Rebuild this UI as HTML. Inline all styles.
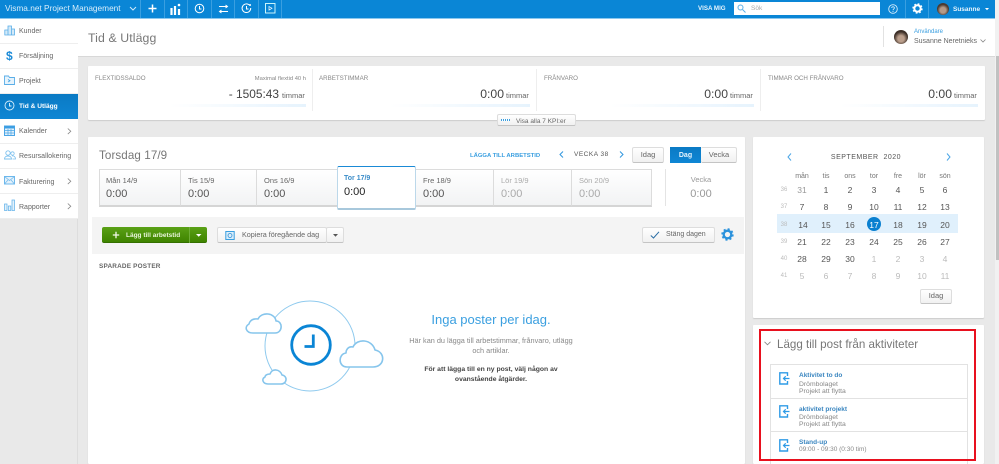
<!DOCTYPE html>
<html lang="sv"><head><meta charset="utf-8"><title>Tid &amp; Utlägg</title>
<style>
html,body{margin:0;padding:0;width:999px;height:464px;overflow:hidden;background:#e9e9e9}
body{position:relative;font-family:"Liberation Sans",sans-serif;color:#555;font-size:8px}
.a,.t{position:absolute}
.t{line-height:14px;white-space:nowrap;margin-top:1px}
.r{text-align:right}.c{text-align:center}
.card{position:absolute;background:#fff;box-shadow:0 1px 1px #ccc;border-radius:1px}
.nav{position:absolute;left:0;width:78px;height:25px;background:#fff;border-bottom:1px solid #eee;box-sizing:border-box}
.btn{position:absolute;box-sizing:border-box;background:linear-gradient(#fff,#f1f1f1);border:1px solid #ddd;border-bottom:1px solid #c4c4c4;border-radius:2px}
.day{position:absolute;top:169px;height:38px;box-sizing:border-box;background:linear-gradient(#fff,#f2f3f4);border:1px solid #dcdcdc;border-bottom:2px solid #d5d5d5;border-left:0}
svg{position:absolute;overflow:visible}
.cal{font-size:8.5px;width:20px;text-align:center;color:#555}
.g{color:#bbb}
.wk{font-size:6px;color:#bbb;width:14px;text-align:center}
.wd{font-size:7px;color:#777;width:20px;text-align:center}
.kh{font-size:6.2px;color:#888}
.kv{font-size:12.2px;color:#444}
.ku{font-size:7.5px;color:#666}
.n{font-size:7px;color:#666}
.dl{font-size:7.5px;color:#666}
.dv{font-size:11px;color:#555}
.an{font-size:6.5px;font-weight:bold;color:#3a86c0}
.ad{font-size:6.8px;color:#888}
</style></head><body>

<!-- Scrollbar -->
<div class="a" style="left:995px;top:0;width:4px;height:464px;background:#f1f1f1"></div>
<div class="a" style="left:996px;top:56px;width:3px;height:204px;background:#c1c1c1"></div>

<!-- Top bar -->
<div class="a" style="left:0;top:0;width:995px;height:18px;background:#0a86d6;border-bottom:1px solid #8cc8ee"></div>
<div class="t" style="left:5px;top:0;font-size:8.3px;color:#d9eefb">Visma.net Project Management</div>
<svg style="left:129px;top:6px" width="8" height="5"><path d="M1 1l3 3 3-3" fill="none" stroke="#cfe8f9" stroke-width="1"/></svg>
<div class="a" style="left:140px;top:0;width:1px;height:18px;background:#3a9fe0"></div>
<svg style="left:148px;top:4px" width="9" height="9"><path d="M4.500 .5v8M.5 4.500h8" stroke="#fff" stroke-width="1.500"/></svg>
<div class="a" style="left:164px;top:0;width:1px;height:18px;background:#3a9fe0"></div>
<svg style="left:170px;top:3px" width="11" height="11"><path d="M1.500 5v7M5 3v9M9 6v6" stroke="#fff" stroke-width="2.200"/><circle cx="9" cy="2" r="1.300" fill="#fff"/></svg>
<div class="a" style="left:187px;top:0;width:1px;height:18px;background:#3a9fe0"></div>
<svg style="left:194px;top:3px" width="11" height="11"><circle cx="5.500" cy="5.500" r="4.300" fill="none" stroke="#fff" stroke-width="1"/><path d="M5.500 3v3h2" fill="none" stroke="#fff"/></svg>
<div class="a" style="left:211px;top:0;width:1px;height:18px;background:#3a9fe0"></div>
<svg style="left:218px;top:4px" width="11" height="10"><path d="M1 2.500h8M7.500 1l2 1.500-2 1.500M10 7.500H2M3.500 6l-2 1.500 2 1.500" fill="none" stroke="#fff"/></svg>
<div class="a" style="left:234px;top:0;width:1px;height:18px;background:#3a9fe0"></div>
<svg style="left:241px;top:3px" width="11" height="11"><path d="M8 1.800A4.300 4.300 0 1 0 9.700 5" fill="none" stroke="#fff"/><path d="M5.500 3v3h2" fill="none" stroke="#fff"/><circle cx="9" cy="2" r="1" fill="#fff"/></svg>
<div class="a" style="left:258px;top:0;width:1px;height:18px;background:#3a9fe0"></div>
<svg style="left:265px;top:3px" width="11" height="11"><rect x=".5" y=".5" width="9.500" height="9.500" fill="none" stroke="#dff" stroke-width=".9"/><path d="M4 3.500l3 1.800-3 1.800z" fill="none" stroke="#fff" stroke-width=".7"/></svg>
<div class="a" style="left:281px;top:0;width:1px;height:18px;background:#3a9fe0"></div>

<div class="t" style="left:698px;top:1px;font-size:6.2px;font-weight:bold;color:#e6f4fd">VISA MIG</div>
<div class="a" style="left:734px;top:2px;width:146px;height:13px;background:#fff"></div>
<svg style="left:737px;top:4px" width="9" height="9"><circle cx="3.500" cy="3.500" r="2.500" fill="none" stroke="#5aaee8"/><path d="M5.500 5.500l3 3" stroke="#5aaee8"/></svg>
<div class="t" style="left:751px;top:1px;font-size:6.5px;color:#aaa">Sök</div>
<svg style="left:888px;top:4px" width="10" height="10"><circle cx="5" cy="5" r="4.300" fill="none" stroke="#d5ecfb" stroke-width=".9"/><path d="M3.700 4c0-1.700 2.700-1.700 2.700 0 0 1-1.400 1-1.400 2.200" fill="none" stroke="#e5f4fd" stroke-width=".8"/><circle cx="5" cy="7.500" r=".5" fill="#fff"/></svg>
<div class="a" style="left:905px;top:0;width:1px;height:18px;background:#3a9fe0"></div>
<svg style="left:912px;top:3px" width="11" height="11"><circle cx="5.500" cy="5.500" r="3.200" fill="none" stroke="#fff" stroke-width="2"/><circle cx="5.500" cy="5.500" r="4.300" fill="none" stroke="#fff" stroke-width="1.800" stroke-dasharray="1.700 1.680"/></svg>
<div class="a" style="left:928px;top:0;width:1px;height:18px;background:#3a9fe0"></div>
<div class="a" style="left:937px;top:3px;width:12px;height:12px;border-radius:50%;background:radial-gradient(circle at 50% 60%,#b59a88 0 30%,#4b3a30 60%)"></div>
<div class="t" style="left:953px;top:2px;font-size:6.5px;font-weight:bold;color:#e6f4fd">Susanne</div>
<svg style="left:985px;top:8px" width="5" height="3"><path d="M0 0h4L2 2.200z" fill="#fff"/></svg>

<!-- Header -->
<div class="a" style="left:78px;top:19px;width:917px;height:37px;background:#fff;border-bottom:1px solid #d8d8d8"></div>
<div class="t" style="left:88px;top:28px;font-size:12.300px;line-height:18px;color:#777;letter-spacing:.1px">Tid &amp; Utlägg</div>
<div class="a" style="left:883px;top:26px;width:1px;height:21px;background:#e2e2e2"></div>
<div class="a" style="left:894px;top:30px;width:14px;height:14px;border-radius:50%;background:radial-gradient(circle at 50% 62%,#bb9f8c 0 28%,#3d2f27 62%)"></div>
<div class="t" style="left:914px;top:24px;font-size:6px;color:#3a9fe0">Användare</div>
<div class="t" style="left:914px;top:34px;font-size:7px;color:#666">Susanne Neretnieks</div>
<svg style="left:980px;top:39px" width="6" height="4"><path d="M.5.500l2.500 2.500 2.500-2.500" fill="none" stroke="#888" stroke-width=".8"/></svg>

<!-- Sidebar -->
<div class="a" style="left:0;top:19px;width:78px;height:445px;background:#e9e9e9;border-right:1px solid #ddd;box-sizing:border-box"></div>
<div class="nav" style="top:19px"></div>
<div class="nav" style="top:44px"></div>
<div class="nav" style="top:69px"></div>
<div class="a" style="left:0;top:94px;width:78px;height:25px;background:linear-gradient(#0a7ac4,#0f86d4)"></div>
<div class="nav" style="top:119px"></div><div class="nav" style="top:144px"></div><div class="nav" style="top:169px"></div><div class="nav" style="top:194px;height:25px"></div>
<div class="t n" style="left:19px;top:24px">Kunder</div>
<div class="t n" style="left:19px;top:49px">Försäljning</div>
<div class="t n" style="left:19px;top:74px">Projekt</div>
<div class="t" style="left:19px;top:99px;font-size:6.6px;color:#fff;font-weight:bold">Tid &amp; Utlägg</div>
<div class="t n" style="left:19px;top:124px">Kalender</div>
<div class="t n" style="left:19px;top:149px">Resursallokering</div>
<div class="t n" style="left:19px;top:175px">Fakturering</div>
<div class="t n" style="left:19px;top:200px">Rapporter</div>
<svg style="left:4px;top:25px" width="11" height="11"><path d="M4 1h3.500v9H4zM.8 5H4v5H.8zM7.500 4H10.500v6H7.500z" fill="#d3e9f8" stroke="#5aaee8" stroke-width=".8"/></svg>
<div class="t" style="left:6px;top:48px;font-size:12px;font-weight:bold;color:#1c8bd8">$</div>
<svg style="left:4px;top:75px" width="11" height="10"><path d="M.5 1h4l1 1.500h5V9.500H.5z" fill="#e6f3fc" stroke="#5aaee8" stroke-width=".9"/><path d="M4 4.500l2 1.300-2 1.300" fill="none" stroke="#3a9fe0" stroke-width=".8"/></svg>
<svg style="left:4px;top:100px" width="11" height="11"><circle cx="5.500" cy="5.500" r="4.500" fill="none" stroke="#d8eefb" stroke-width=".9"/><path d="M5.500 3v3h2" fill="none" stroke="#e8f5fe" stroke-width=".9"/></svg>
<svg style="left:4px;top:125px" width="11" height="11"><rect x=".5" y="1" width="10" height="9.500" fill="#e3f1fb" stroke="#4aa5e6"/><rect x=".5" y="1" width="10" height="2.500" fill="#3c9ee3"/><path d="M1 5.500h9M1 8h9M4 4v6M7 4v6" stroke="#4aa5e6" stroke-width=".7"/></svg>
<svg style="left:4px;top:150px" width="12" height="10"><circle cx="4" cy="3" r="2.200" fill="none" stroke="#7cc0ee" stroke-width=".9"/><path d="M.5 9c0-4 7-4 7 0z" fill="none" stroke="#7cc0ee" stroke-width=".9"/><circle cx="8.500" cy="3.500" r="1.700" fill="none" stroke="#7cc0ee" stroke-width=".8"/><path d="M8 6c2-.500 3.500 1 3.500 3H8.500" fill="none" stroke="#7cc0ee" stroke-width=".8"/></svg>
<svg style="left:4px;top:176px" width="11" height="9"><rect x=".5" y=".5" width="10" height="7.500" fill="#e3f1fb" stroke="#6db8ec"/><path d="M.5 .5l5 4 5-4M.5 8l3.500-4M10.500 8L7 4" fill="none" stroke="#6db8ec" stroke-width=".7"/></svg>
<svg style="left:4px;top:199px" width="11" height="12"><rect x=".5" y="5" width="2.500" height="6.500" fill="#e3f1fb" stroke="#5aaee8" stroke-width=".7"/><rect x="4.300" y="7" width="2.500" height="4.500" fill="#e3f1fb" stroke="#5aaee8" stroke-width=".7"/><rect x="8" y="1" width="2.500" height="10.500" fill="#e3f1fb" stroke="#5aaee8" stroke-width=".7"/></svg>
<svg style="left:67px;top:128px" width="5" height="7"><path d="M.8.500l3 2.800-3 2.800" fill="none" stroke="#888" stroke-width=".8"/></svg>
<svg style="left:67px;top:178px" width="5" height="7"><path d="M.8.500l3 2.800-3 2.800" fill="none" stroke="#888" stroke-width=".8"/></svg>
<svg style="left:67px;top:203px" width="5" height="7"><path d="M.8.500l3 2.800-3 2.800" fill="none" stroke="#888" stroke-width=".8"/></svg>

<!-- KPI card -->
<div class="card" style="left:88px;top:66px;width:897px;height:54px"></div>
<div class="a" style="left:312px;top:69px;width:1px;height:42px;background:#eee"></div>
<div class="a" style="left:536px;top:69px;width:1px;height:42px;background:#eee"></div>
<div class="a" style="left:760px;top:69px;width:1px;height:42px;background:#eee"></div>
<div class="t kh" style="left:95px;top:71px">FLEXTIDSSALDO</div>
<div class="t kh" style="left:319px;top:71px">ARBETSTIMMAR</div>
<div class="t kh" style="left:544px;top:71px">FRÅNVARO</div>
<div class="t kh" style="left:768px;top:71px">TIMMAR OCH FRÅNVARO</div>
<div class="t r" style="left:206px;width:100px;top:71px;font-size:5.8px;color:#888">Maximal flextid 40 h</div>
<div class="t kv r" style="left:180px;width:99px;top:86px;font-size:11.9px">- 1505:43</div><div class="t ku" style="left:282px;top:88px">timmar</div>
<div class="t kv r" style="left:430px;width:74px;top:86px">0:00</div><div class="t ku" style="left:506px;top:88px">timmar</div>
<div class="t kv r" style="left:654px;width:74px;top:86px">0:00</div><div class="t ku" style="left:730px;top:88px">timmar</div>
<div class="t kv r" style="left:878px;width:74px;top:86px">0:00</div><div class="t ku" style="left:954px;top:88px">timmar</div>
<div class="a" style="left:170px;top:104px;width:136px;height:3px;background:linear-gradient(90deg,#fff,#e6f3fd)"></div>
<div class="a" style="left:390px;top:104px;width:140px;height:3px;background:linear-gradient(90deg,#fff,#e6f3fd)"></div>
<div class="a" style="left:610px;top:104px;width:144px;height:3px;background:linear-gradient(90deg,#fff,#e6f3fd)"></div>
<div class="a" style="left:840px;top:104px;width:138px;height:3px;background:linear-gradient(90deg,#fff,#e6f3fd)"></div>
<div class="btn" style="left:497px;top:114px;width:79px;height:12px"></div>
<div class="t" style="left:516px;top:114px;font-size:6.5px;color:#666">Visa alla 7 KPI:er</div>
<div class="a" style="left:501px;top:119px;width:9px;height:2px;background:repeating-linear-gradient(90deg,#3a9fe0 0 1px,#fff 1px 2px)"></div>

<!-- Main card -->
<div class="card" style="left:88px;top:137px;width:657px;height:327px"></div>
<div class="t" style="left:99px;top:147px;font-size:11.6px;line-height:16px;color:#777;letter-spacing:.1px">Torsdag 17/9</div>
<div class="t" style="left:470px;top:148px;font-size:5.9px;font-weight:bold;color:#3a9fe0">LÄGGA TILL ARBETSTID</div>
<svg style="left:559px;top:151px" width="5" height="7"><path d="M4 .5L1 3.500l3 3" fill="none" stroke="#2f96de" stroke-width="1"/></svg>
<div class="t" style="left:574px;top:147px;font-size:6.5px;color:#555;letter-spacing:.5px">VECKA 38</div>
<svg style="left:619px;top:151px" width="5" height="7"><path d="M1 .5l3 3-3 3" fill="none" stroke="#2f96de" stroke-width="1"/></svg>
<div class="btn" style="left:632px;top:147px;width:32px;height:16px"></div>
<div class="t c" style="left:632px;width:32px;top:147px;font-size:7.500px;color:#666">Idag</div>
<div class="a" style="left:670px;top:147px;width:31px;height:16px;background:linear-gradient(#0a7ac4,#0f86d4);box-sizing:border-box"></div>
<div class="t c" style="left:670px;width:31px;top:148px;font-size:7px;color:#e7f4fd;font-weight:bold">Dag</div>
<div class="btn" style="left:701px;top:147px;width:36px;height:16px;border-left:0"></div>
<div class="t c" style="left:701px;width:36px;top:147px;font-size:7.500px;color:#666">Vecka</div>

<!-- Days -->
<div class="day" style="left:99px;width:82px;border-left:1px solid #dcdcdc"></div>
<div class="day" style="left:181px;width:76px"></div>
<div class="day" style="left:257px;width:81px"></div>
<div class="day" style="left:416px;width:78px"></div>
<div class="day" style="left:494px;width:78px"></div>
<div class="day" style="left:572px;width:80px"></div>
<div class="a" style="left:337px;top:166px;width:79px;height:44px;background:#fff;border:1px solid #bcd8ea;border-top:1px solid #1a8ad6;border-bottom:2px solid #a8c8dc;box-sizing:border-box;border-radius:2px"></div>
<div class="t dl" style="left:106px;top:173px">Mån 14/9</div><div class="t dv" style="left:106px;top:186px">0:00</div>
<div class="t dl" style="left:188px;top:173px">Tis 15/9</div><div class="t dv" style="left:188px;top:186px">0:00</div>
<div class="t dl" style="left:264px;top:173px">Ons 16/9</div><div class="t dv" style="left:264px;top:186px">0:00</div>
<div class="t dl" style="left:344px;top:171px;font-size:7px;color:#3a8cc8;font-weight:bold">Tor 17/9</div><div class="t dv" style="left:344px;top:184px;color:#222">0:00</div>
<div class="t dl" style="left:423px;top:173px">Fre 18/9</div><div class="t dv" style="left:423px;top:186px">0:00</div>
<div class="t dl" style="left:501px;top:173px;color:#aaa">Lör 19/9</div><div class="t dv" style="left:501px;top:186px;color:#aaa">0:00</div>
<div class="t dl" style="left:579px;top:173px;color:#aaa">Sön 20/9</div><div class="t dv" style="left:579px;top:186px;color:#aaa">0:00</div>
<div class="a" style="left:665px;top:169px;width:1px;height:37px;background:#e4e4e4"></div>
<div class="t dl c" style="left:666px;width:70px;top:172px;color:#999">Vecka</div>
<div class="t dv c" style="left:666px;width:70px;top:186px;color:#999">0:00</div>

<!-- Toolbar -->
<div class="a" style="left:92px;top:217px;width:652px;height:37px;background:#f4f4f4"></div>
<div class="a" style="left:102px;top:227px;width:105px;height:16px;border-radius:2px;background:linear-gradient(#5aa116,#3f8400);border-bottom:1px solid #347000;box-sizing:border-box"></div>
<div class="a" style="left:189px;top:227px;width:1px;height:16px;background:#6fae38"></div>
<svg style="left:112px;top:231px" width="8" height="8"><path d="M4 .8v6.400M.8 4h6.400" stroke="#f3f9ea" stroke-width="1.300"/></svg>
<div class="t" style="left:126px;top:228px;font-size:6.5px;color:#e9f5dc;font-weight:bold">Lägg till arbetstid</div>
<svg style="left:196px;top:234px" width="6" height="3"><path d="M0 0h5.500L2.700 2.800z" fill="#fff"/></svg>
<div class="btn" style="left:217px;top:227px;width:110px;height:16px"></div>
<div class="btn" style="left:326px;top:227px;width:18px;height:16px"></div>
<svg style="left:225px;top:230px" width="10" height="10"><rect x=".8" y="1.500" width="8.400" height="8" fill="#dceefa" stroke="#3a9fe0"/><circle cx="5" cy="5.500" r="2" fill="none" stroke="#2f8fd6" stroke-width=".8"/></svg>
<div class="t" style="left:242px;top:227px;font-size:7.200px;color:#666">Kopiera föregående dag</div>
<svg style="left:333px;top:234px" width="5" height="3"><path d="M0 0h5L2.500 2.700z" fill="#555"/></svg>
<div class="btn" style="left:642px;top:227px;width:73px;height:16px"></div>
<svg style="left:650px;top:231px" width="10" height="8"><path d="M.8 4.500L3.500 7 9 .8" fill="none" stroke="#2a6ea5" stroke-width="1"/></svg>
<div class="t" style="left:666px;top:227px;font-size:7px;color:#666">Stäng dagen</div>
<svg style="left:721px;top:228px" width="13" height="13"><circle cx="6.500" cy="6.500" r="3.800" fill="none" stroke="#2b92dc" stroke-width="2.300"/><circle cx="6.500" cy="6.500" r="5.200" fill="none" stroke="#2b92dc" stroke-width="2" stroke-dasharray="2.040 2.040"/></svg>

<div class="t" style="left:99px;top:259px;font-size:6.4px;font-weight:bold;color:#666;letter-spacing:.2px">SPARADE POSTER</div>

<!-- Illustration -->
<svg style="left:200px;top:280px" width="200" height="130" viewBox="0 0 200 130">
<circle cx="110" cy="66" r="45" fill="#fff" stroke="#8fcaee" stroke-width="1"/>
<g fill="#fff" stroke="#86c5ec" stroke-width="1.600" stroke-linejoin="round">
<path d="M53 53H75C83 53 83 41 76 41C75 33 62 31 58 39C50 38 49 44 49 44C44 47 46 53 53 53Z"/>
<path d="M147 87H173C185 87 186 72 175 70C172 59 157 58 153 67C148 66 146 70 146 73C138 74 138 87 147 87Z"/>
<path d="M68 104H81C87 104 88 96 82 95C80 89 72 88 70 94C66 94 65 96 65 97C61 99 63 104 68 104Z"/>
</g>
<circle cx="111" cy="65" r="19.300" fill="#fff" stroke="#0a85d5" stroke-width="2.800"/>
<path d="M113.300 54.500V66.500H104.500" fill="none" stroke="#0a85d5" stroke-width="2.800"/>
</svg>

<div class="t c" style="left:391px;width:200px;top:312px;font-size:13px;color:#3a9fe0">Inga poster per idag.</div>
<div class="t c" style="left:391px;width:200px;top:335px;font-size:7.300px;line-height:9.500px;color:#888;white-space:normal">Här kan du lägga till arbetstimmar, frånvaro, utlägg<br>och artiklar.</div>
<div class="t c" style="left:391px;width:200px;top:364px;font-size:6.800px;line-height:9.500px;color:#444;font-weight:bold;white-space:normal">För att lägga till en ny post, välj någon av<br>ovanstående åtgärder.</div>

<!-- Calendar -->
<div class="card" style="left:753px;top:137px;width:231px;height:181px"></div>
<svg style="left:787px;top:153px" width="5" height="8"><path d="M4 .5L1 4l3 3.500" fill="none" stroke="#4ba6e6"/></svg>
<svg style="left:946px;top:153px" width="5" height="8"><path d="M1 .5L4 4 1 7.500" fill="none" stroke="#4ba6e6"/></svg>
<div class="t c" style="left:793px;width:146px;top:150px;font-size:7px;color:#555;letter-spacing:.5px">SEPTEMBER&nbsp; 2020</div>
<div class="a" style="left:777px;top:214px;width:181px;height:19px;background:#e0f0fc"></div>
<div class="a" style="left:867px;top:217px;width:14px;height:14px;border-radius:50%;background:#0a80d0"></div>

<div class="t wd" style="left:792px;top:169px">mån</div><div class="t wd" style="left:816px;top:169px">tis</div><div class="t wd" style="left:840px;top:169px">ons</div><div class="t wd" style="left:864px;top:169px">tor</div><div class="t wd" style="left:888px;top:169px">fre</div><div class="t wd" style="left:912px;top:169px">lör</div><div class="t wd" style="left:935px;top:169px">sön</div>
<div class="t wk" style="left:777px;top:182px">36</div><div class="t wk" style="left:777px;top:199px">37</div><div class="t wk" style="left:777px;top:217px">38</div><div class="t wk" style="left:777px;top:234px">39</div><div class="t wk" style="left:777px;top:251px">40</div><div class="t wk" style="left:777px;top:268px">41</div>

<div class="t cal g" style="left:792px;top:182px;color:#999">31</div><div class="t cal" style="left:816px;top:182px">1</div><div class="t cal" style="left:840px;top:182px">2</div><div class="t cal" style="left:864px;top:182px">3</div><div class="t cal" style="left:888px;top:182px">4</div><div class="t cal" style="left:912px;top:182px">5</div><div class="t cal" style="left:935px;top:182px">6</div>
<div class="t cal" style="left:792px;top:199px">7</div><div class="t cal" style="left:816px;top:199px">8</div><div class="t cal" style="left:840px;top:199px">9</div><div class="t cal" style="left:864px;top:199px">10</div><div class="t cal" style="left:888px;top:199px">11</div><div class="t cal" style="left:912px;top:199px">12</div><div class="t cal" style="left:935px;top:199px">13</div>
<div class="t cal" style="left:793px;top:217px">14</div><div class="t cal" style="left:816px;top:217px">15</div><div class="t cal" style="left:840px;top:217px">16</div><div class="t cal" style="left:864px;top:217px;color:#fff">17</div><div class="t cal" style="left:888px;top:217px">18</div><div class="t cal" style="left:912px;top:217px">19</div><div class="t cal" style="left:935px;top:217px">20</div>
<div class="t cal" style="left:792px;top:234px">21</div><div class="t cal" style="left:816px;top:234px">22</div><div class="t cal" style="left:840px;top:234px">23</div><div class="t cal" style="left:864px;top:234px">24</div><div class="t cal" style="left:888px;top:234px">25</div><div class="t cal" style="left:912px;top:234px">26</div><div class="t cal" style="left:935px;top:234px">27</div>
<div class="t cal" style="left:792px;top:251px">28</div><div class="t cal" style="left:816px;top:251px">29</div><div class="t cal" style="left:840px;top:251px">30</div><div class="t cal g" style="left:864px;top:251px">1</div><div class="t cal g" style="left:888px;top:251px">2</div><div class="t cal g" style="left:912px;top:251px">3</div><div class="t cal g" style="left:935px;top:251px">4</div>
<div class="t cal g" style="left:792px;top:268px">5</div><div class="t cal g" style="left:816px;top:268px">6</div><div class="t cal g" style="left:840px;top:268px">7</div><div class="t cal g" style="left:864px;top:268px">8</div><div class="t cal g" style="left:888px;top:268px">9</div><div class="t cal g" style="left:912px;top:268px">10</div><div class="t cal g" style="left:935px;top:268px">11</div>
<div class="btn" style="left:920px;top:289px;width:32px;height:15px"></div>
<div class="t c" style="left:920px;width:32px;top:288px;font-size:7.500px;color:#666">Idag</div>

<!-- Activities -->
<div class="card" style="left:753px;top:325px;width:231px;height:139px"></div>
<svg style="left:764px;top:341px" width="7" height="5"><path d="M.5.800L3.500 3.800 6.500.8" fill="none" stroke="#888" stroke-width=".9"/></svg>
<div class="t" style="left:777px;top:337px;font-size:11.600px;color:#777">Lägg till post från aktiviteter</div>
<div class="a" style="left:770px;top:364px;width:198px;height:100px;background:#fff;border:1px solid #e2e2e2;border-bottom:0;box-sizing:border-box"></div>
<div class="a" style="left:771px;top:398px;width:196px;height:1px;background:#e2e2e2"></div>
<div class="a" style="left:771px;top:431px;width:196px;height:1px;background:#e2e2e2"></div>
<svg style="left:779px;top:372px" width="11" height="13"><path d="M8.500 4V.8H.8V12H8.500V9" fill="none" stroke="#2f9be6" stroke-width="1.400"/><path d="M10.500 6.500H4.500M6.700 4.300L4.500 6.500 6.700 8.700" fill="none" stroke="#2f9be6" stroke-width="1.200"/></svg>
<svg style="left:779px;top:405px" width="11" height="13"><path d="M8.500 4V.8H.8V12H8.500V9" fill="none" stroke="#2f9be6" stroke-width="1.400"/><path d="M10.500 6.500H4.500M6.700 4.300L4.500 6.500 6.700 8.700" fill="none" stroke="#2f9be6" stroke-width="1.200"/></svg>
<svg style="left:779px;top:439px" width="11" height="13"><path d="M8.500 4V.8H.8V12H8.500V9" fill="none" stroke="#2f9be6" stroke-width="1.400"/><path d="M10.500 6.500H4.500M6.700 4.300L4.500 6.500 6.700 8.700" fill="none" stroke="#2f9be6" stroke-width="1.200"/></svg>
<div class="t an" style="left:799px;top:368px">Aktivitet to do</div>
<div class="t ad" style="left:799px;top:377px">Drömbolaget</div>
<div class="t ad" style="left:799px;top:384px">Projekt att flytta</div>
<div class="t an" style="left:799px;top:402px">aktivitet projekt</div>
<div class="t ad" style="left:799px;top:410px">Drömbolaget</div>
<div class="t ad" style="left:799px;top:417px">Projekt att flytta</div>
<div class="t an" style="left:799px;top:435px">Stand-up</div>
<div class="t" style="left:799px;top:442px;font-size:6.500px;color:#888">09:00 - 09:30 (0:30 tim)</div>

<!-- Red box -->
<div class="a" style="left:759px;top:329px;width:217px;height:132px;border:2px solid #e8101e;box-sizing:border-box"></div>
</body></html>
